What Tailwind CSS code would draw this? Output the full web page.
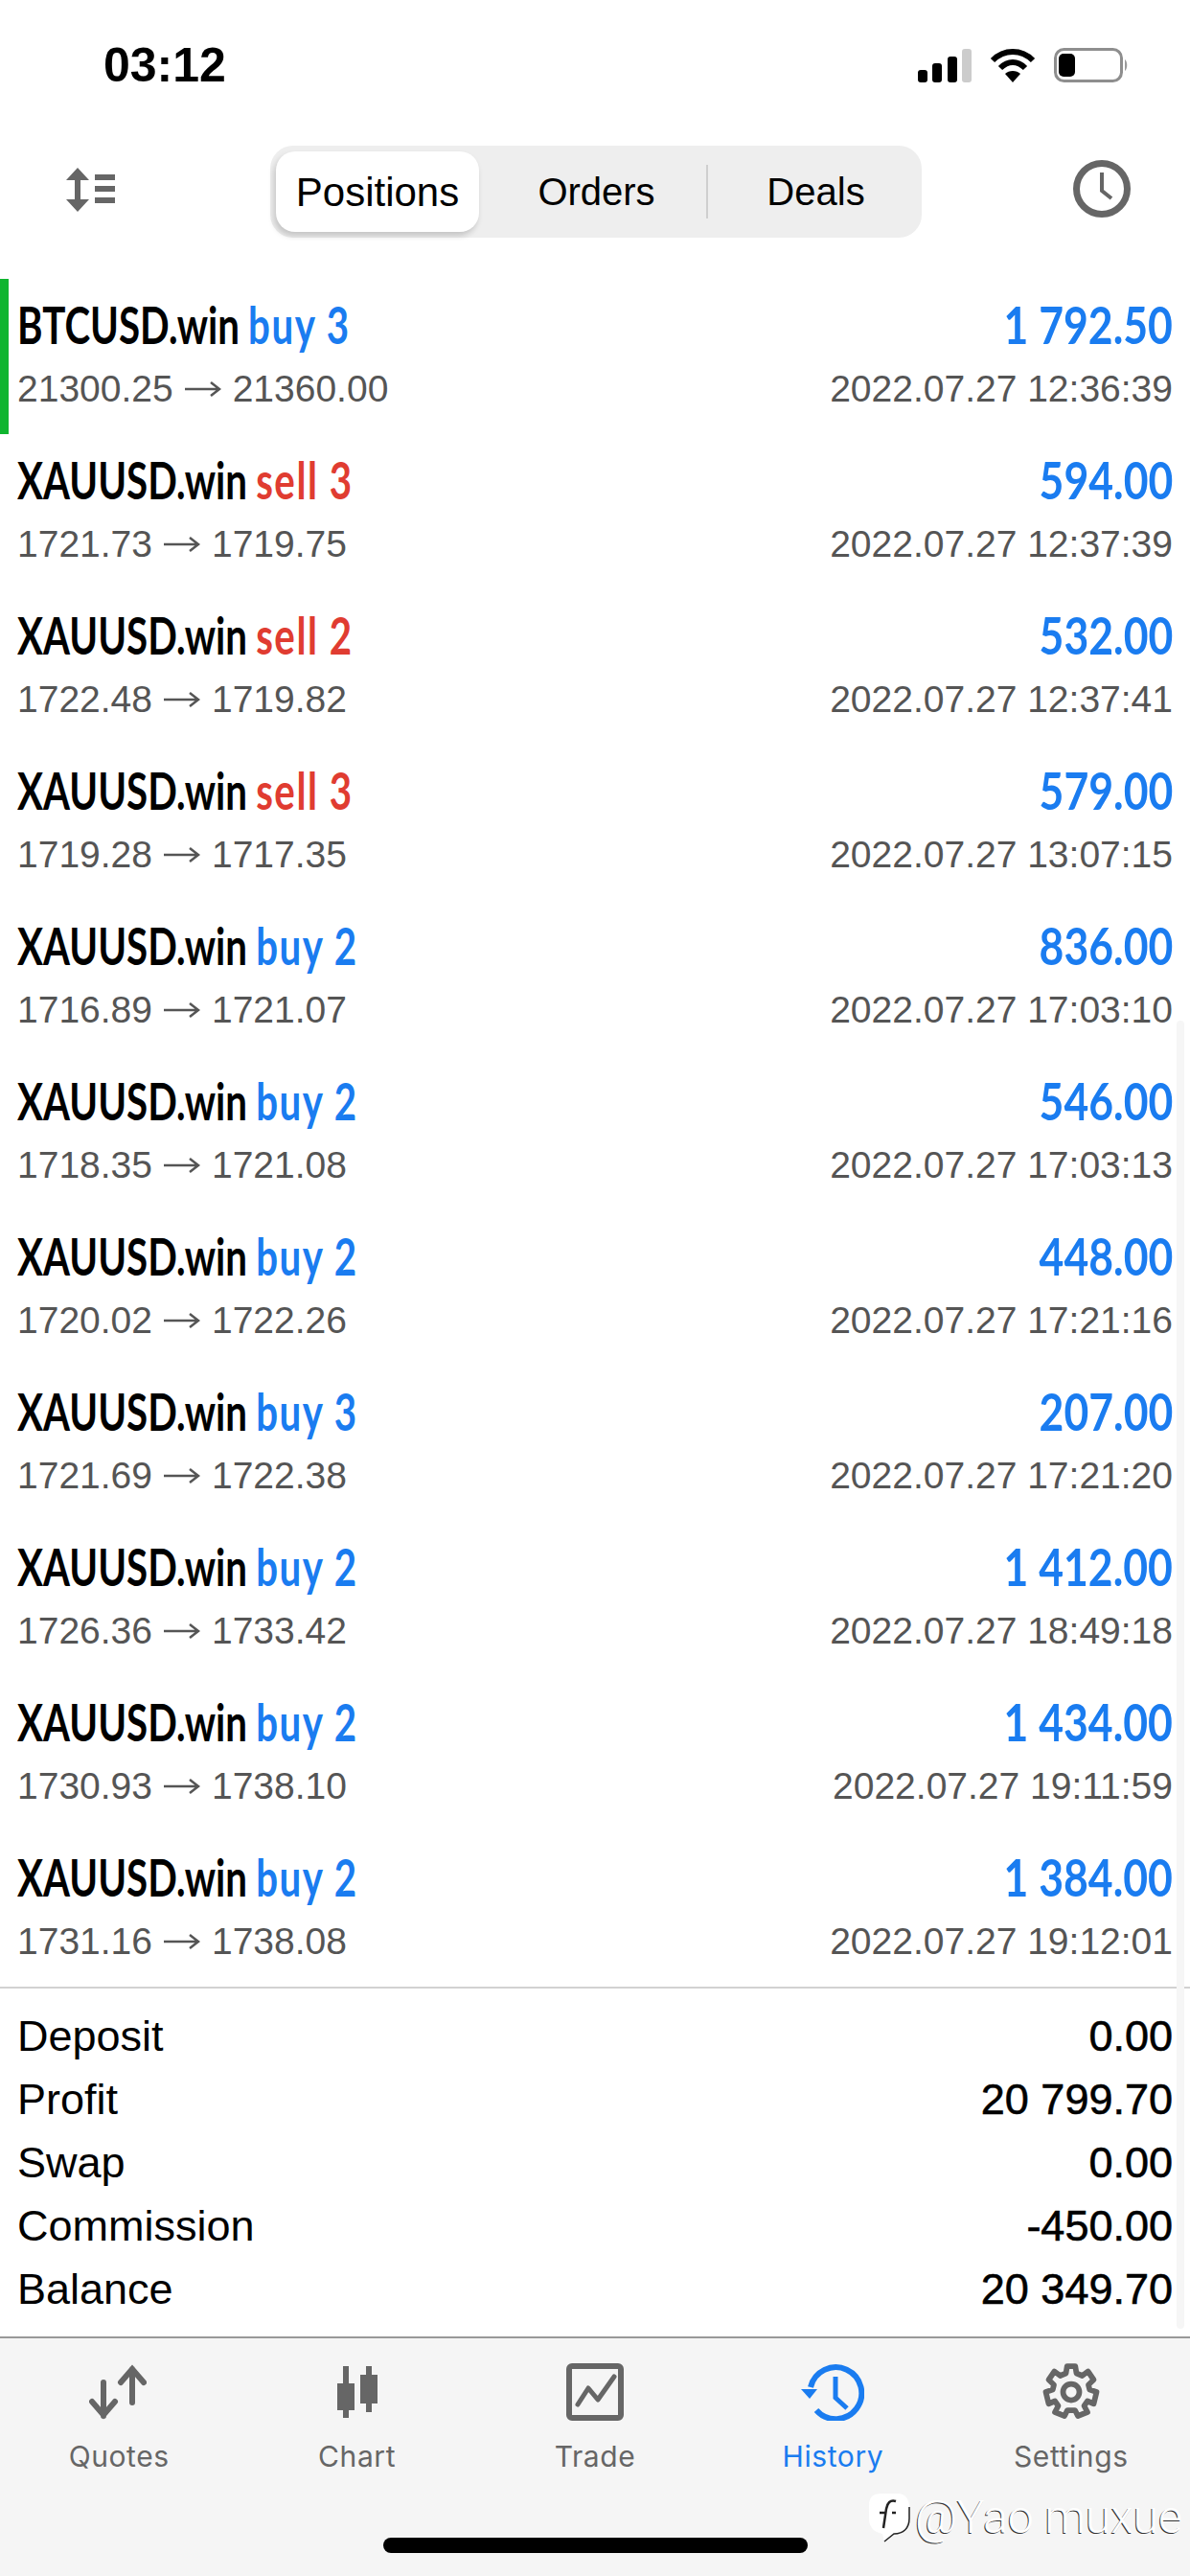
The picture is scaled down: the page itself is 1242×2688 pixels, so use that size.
<!DOCTYPE html>
<html lang="en">
<head>
  <meta charset="UTF-8" />
  <meta name="viewport" content="width=device-width, initial-scale=1.0"/>
  <title>History</title>
  <script src="https://cdn.jsdelivr.net/npm/@tailwindcss/browser@4"></script>
</head>
<body class="bg-white text-black font-['Liberation_Sans',Arial,sans-serif]">
  <div class="relative w-[1242px] h-[2688px] overflow-hidden flex flex-col">

    <!-- Status bar -->
    <div class="h-[150px] flex items-start justify-between pl-[108px] pr-[64px] pt-[42px]">
      <span class="text-[50px] leading-[52px] font-bold">03:12</span>
      <div class="flex items-end gap-[19px] pt-[8px]">
        <svg width="56" height="35" viewBox="0 0 56 35">
          <rect x="0" y="22" width="10" height="13" rx="3" fill="#000"/>
          <rect x="15" y="15" width="10" height="20" rx="3" fill="#000"/>
          <rect x="31" y="8" width="10" height="27" rx="3" fill="#000"/>
          <rect x="46" y="0" width="10" height="35" rx="3" fill="#ccc"/>
        </svg>
        <svg width="48" height="36" viewBox="0 0 48 36" fill="none" stroke="#000" stroke-width="6">
          <path d="M3 13 C15 1 33 1 45 13"/>
          <path d="M11 21 C19 13 29 13 37 21"/>
          <path d="M24 36 L16 27 C20 23 28 23 32 27 Z" fill="#000" stroke="none"/>
        </svg>
        <svg width="78" height="36" viewBox="0 0 78 36">
          <rect x="1.5" y="1.5" width="69" height="33" rx="9" fill="none" stroke="#8e8e8e" stroke-width="3"/>
          <rect x="5" y="6" width="17" height="24" rx="5" fill="#000"/>
          <path d="M74 12 C77 14 77 22 74 24 Z" fill="#9a9a9a"/>
        </svg>
      </div>
    </div>

    <!-- Toolbar -->
    <div class="h-[141px] flex items-start justify-between pl-[68px] pr-[62px] pt-[2px]">
      <svg class="mt-[23px]" width="52" height="46" viewBox="0 0 52 46" fill="#666">
        <path d="M13 0 L25 13 H16 V33 H25 L13 46 L1 33 H10 V13 H1 Z"/>
        <rect x="31" y="7" width="21" height="6"/>
        <rect x="31" y="19" width="21" height="6"/>
        <rect x="31" y="31" width="21" height="6"/>
      </svg>
      <div class="w-[680px] h-[96px] ml-[4px] bg-[#eeeeee] rounded-[24px] p-[6px] flex items-center text-[40px]">
        <div class="w-[212px] h-[84px] bg-white rounded-[20px] shadow-[-2px_4px_6px_rgba(0,0,0,0.18)] flex items-center justify-center text-[42px]">Positions</div>
        <div class="w-[237px] text-center pl-[8px]">Orders</div>
        <div class="w-[2px] h-[56px] bg-[#cfcfcf]"></div>
        <div class="flex-1 text-center pl-[8px]">Deals</div>
      </div>
      <svg class="mt-[15px]" width="60" height="60" viewBox="0 0 60 60" fill="none" stroke="#666" stroke-width="7">
        <circle cx="30" cy="30" r="26.5"/>
        <path d="M30 13 V32 L40 40" stroke-width="4"/>
      </svg>
    </div>

    <!-- Deals list -->
    <div id="deals" class="flex flex-col"></div>

    <!-- Summary -->
    <div class="h-[365px] border-t-2 border-[#d2d2d2] pt-[17px] pl-[18px] pr-[18px] text-[45px]">
      <div class="h-[66px] flex items-center justify-between"><span>Deposit</span><span class="[-webkit-text-stroke:0.6px_#000]">0.00</span></div>
      <div class="h-[66px] flex items-center justify-between"><span>Profit</span><span class="[-webkit-text-stroke:0.6px_#000]">20 799.70</span></div>
      <div class="h-[66px] flex items-center justify-between"><span>Swap</span><span class="[-webkit-text-stroke:0.6px_#000]">0.00</span></div>
      <div class="h-[66px] flex items-center justify-between"><span>Commission</span><span class="[-webkit-text-stroke:0.6px_#000]">-450.00</span></div>
      <div class="h-[66px] flex items-center justify-between"><span>Balance</span><span class="[-webkit-text-stroke:0.6px_#000]">20 349.70</span></div>
    </div>

    <!-- Tab bar -->
    <div class="h-[250px] border-t-2 border-[#999999] bg-[#f5f5f5] grid grid-cols-5 text-[#666666] font-['Inter',sans-serif] text-[30px] tracking-[0.6px]">
      <div class="flex flex-col items-center pt-[26px] gap-[15px]">
        <svg width="60" height="60" viewBox="94 2466 60 60" fill="none" stroke="#666" stroke-width="6" stroke-linecap="round" class="-ml-[2px]">
          <path d="M139 2472 V2507 M127 2486 L139 2472 L151 2486"/>
          <path d="M109 2521 V2486 M97 2506 L109 2520 L121 2506"/>
        </svg>
        <span>Quotes</span>
      </div>
      <div class="flex flex-col items-center pt-[26px] gap-[15px]">
        <svg width="60" height="60" viewBox="342 2466 60 60" fill="#666">
          <rect x="357" y="2469" width="6" height="54"/>
          <rect x="351" y="2487" width="18" height="28"/>
          <rect x="381" y="2469" width="6" height="48"/>
          <path fill-rule="evenodd" d="M375 2478 H393 V2508 H375 Z M381 2484 V2502 H387 V2484 Z"/>
        </svg>
        <span>Chart</span>
      </div>
      <div class="flex flex-col items-center pt-[26px] gap-[15px]">
        <svg width="60" height="60" viewBox="0 0 60 60" fill="none" stroke="#666">
          <rect x="3" y="3" width="54" height="54" rx="3" stroke-width="6"/>
          <path d="M12 43 L23 26 L33 38 L50 14" stroke-width="5" stroke-linecap="round" stroke-linejoin="round"/>
        </svg>
        <span>Trade</span>
      </div>
      <div class="flex flex-col items-center pt-[26px] gap-[15px] text-[#1a7cf0]">
        <svg width="66" height="60" viewBox="0 0 66 60" fill="none" stroke="#1a7cf0" stroke-width="6">
          <path d="M10 25 A27 27 0 1 1 16 49"/>
          <path d="M0 27 H17 L9 37 Z" fill="#1a7cf0" stroke="none"/>
          <path d="M36 14 V36 L48 47" stroke-width="5"/>
        </svg>
        <span>History</span>
      </div>
      <div class="flex flex-col items-center pt-[26px] gap-[15px]">
        <svg width="60" height="60" viewBox="0 0 24 24" fill="none" stroke="#666" stroke-width="2.3" stroke-linejoin="round">
          <path d="M10.3 1.2 H13.7 L14.2 4.2 L16.6 5.2 L19 3.4 L21.4 6.9 L19.2 9 L19.7 11 L22.6 12 L21.4 16.9 L18.8 15.8 L17.4 17.8 L18.8 20.4 L14.8 22 L13.6 19.6 H10.4 L9.2 22 L5.2 20.4 L6.6 17.8 L5.2 15.8 L2.6 16.9 L1.4 12 L4.3 11 L4.8 9 L2.6 6.9 L5 3.4 L7.4 5.2 L9.8 4.2 Z"/>
          <circle cx="12" cy="12" r="3.4"/>
        </svg>
        <span>Settings</span>
      </div>
    </div>

    <!-- Scroll indicator -->
    <div class="absolute left-[1228px] top-[1065px] w-[8px] h-[1365px] rounded-full bg-[#f6f6f6]"></div>
    <!-- Home indicator -->
    <div class="absolute left-[400px] top-[2648px] w-[443px] h-[16px] rounded-full bg-black"></div>
    <!-- Watermark -->
    <div class="absolute left-[905px] top-[2600px] flex items-center gap-[4px] text-white font-['Roboto',sans-serif] font-light text-[48px] leading-[50px] [text-shadow:-1px_1px_0_#333]">
      <svg width="46" height="54" viewBox="0 0 46 54">
        <path d="M14 2 H32 C40 2 44 8 44 16 V28 C44 38 38 44 28 44 L18 52 L16 44 C6 42 2 36 2 28 V14 C2 6 6 2 14 2 Z" fill="#fff"/>
        <path d="M30 10 C24 8 21 12 20 18 L17 38 M13 22 H20 M26 22 H30" fill="none" stroke="#222" stroke-width="2.5"/>
        <path d="M44 16 V28 C44 38 38 44 28 44 L18 52" fill="none" stroke="#222" stroke-width="1.5"/>
      </svg>
      <span>@Yao muxue</span>
    </div>
  </div>

  <script>
    const rows = [
      ["BTCUSD.win", "buy 3", "21300.25", "21360.00", "1 792.50", "12:36:39"],
      ["XAUUSD.win", "sell 3", "1721.73", "1719.75", "594.00", "12:37:39"],
      ["XAUUSD.win", "sell 2", "1722.48", "1719.82", "532.00", "12:37:41"],
      ["XAUUSD.win", "sell 3", "1719.28", "1717.35", "579.00", "13:07:15"],
      ["XAUUSD.win", "buy 2", "1716.89", "1721.07", "836.00", "17:03:10"],
      ["XAUUSD.win", "buy 2", "1718.35", "1721.08", "546.00", "17:03:13"],
      ["XAUUSD.win", "buy 2", "1720.02", "1722.26", "448.00", "17:21:16"],
      ["XAUUSD.win", "buy 3", "1721.69", "1722.38", "207.00", "17:21:20"],
      ["XAUUSD.win", "buy 2", "1726.36", "1733.42", "1 412.00", "18:49:18"],
      ["XAUUSD.win", "buy 2", "1730.93", "1738.10", "1 434.00", "19:11:59"],
      ["XAUUSD.win", "buy 2", "1731.16", "1738.08", "1 384.00", "19:12:01"],
    ];

    const list = document.getElementById("deals");
    rows.forEach(([symbol, side, from, to, profit, time], i) => {
      const color = side.startsWith("buy") ? "text-[#1a7cf0]" : "text-[#e03c31]";
      const row = document.createElement("div");
      row.className = "relative h-[162px] pl-[18px] pr-[18px] pt-[18px] flex flex-col";
      row.innerHTML = `
        ${i === 0 ? '<div class="absolute left-0 top-0 w-[9px] h-[162px] bg-[#0fb52f]"></div>' : ''}
        <div class="flex justify-between items-baseline h-[60px] text-[53px] leading-[60px] font-bold font-['Lato',sans-serif] whitespace-nowrap">
          <span class="inline-block origin-left scale-x-[0.76]">${symbol}<span class="${color} ml-[12px] tracking-[2px]">${side}</span></span>
          <span class="inline-block origin-right scale-x-[0.84] text-[#1a7cf0]">${profit}</span>
        </div>
        <div class="flex justify-between items-center mt-[14px] text-[39px] leading-[46px] text-[#555555]">
          <span class="flex items-center gap-[12px]">${from}
            <svg width="38" height="18" viewBox="0 0 38 18" fill="none" stroke="#555" stroke-width="2.5"><path d="M0 9 H36 M27 2 L36 9 L27 16"/></svg>
            ${to}</span>
          <span>2022.07.27 ${time}</span>
        </div>`;
      list.appendChild(row);
    });
  </script>
</body>
</html>
